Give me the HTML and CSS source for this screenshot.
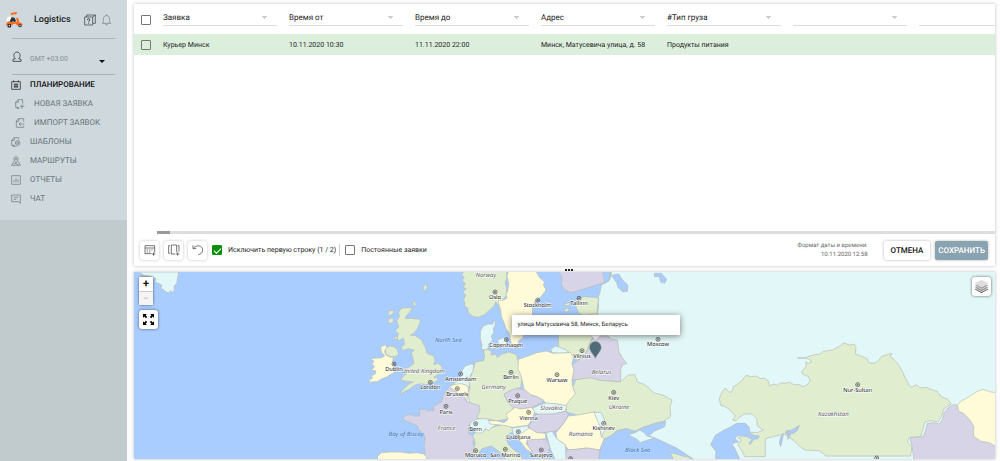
FILE: index.html
```html
<!DOCTYPE html>
<html lang="ru">
<head>
  <meta charset="UTF-8" />
  <meta name="viewport" content="width=device-width, initial-scale=1.0"/>
  <title>Logistics</title>
  <link rel="stylesheet" href="styles.css">
</head>
<body>
  <aside class="sidebar">
    <div class="sidebar-top">
      <header class="brand">
        <svg class="logo" viewBox="0 0 54 54">
          <path d="M17 6l18-3 0 6-16 4z" fill="#ff6a1a"/>
          <circle cx="26" cy="14" r="4" fill="#f3c9a5"/>
          <path d="M8 17h13v13H4z" fill="#fff"/>
          <path d="M20 18l9 3 4 9-4 4-6-4-2 10-8-6z" fill="#26343f"/>
          <path d="M33 22l6-2 5 18-6 6-6-6-8 1-2 4H3c0-9 6-12 14-11l12 2 7-2z" fill="#ff6a1a"/>
          <circle cx="13" cy="44" r="6" fill="#27313a"/><circle cx="13" cy="44" r="2" fill="#fff"/>
          <path d="M35 43c1-11 17-11 18 0z" fill="#ff6a1a"/><circle cx="45" cy="44" r="5" fill="#27313a"/><circle cx="45" cy="44" r="2" fill="#fff"/>
        </svg>
        <h1>Logistics</h1>
        <button class="icon-btn" aria-label="Справка">
          <svg class="ic-help" viewBox="0 0 36 36" fill="none" stroke="#333" stroke-width="2"><path d="M2 9h24v24H2zM8 9V3h26v25h-8M26 9l8-6"/><path d="M10 18c0-5 8-5 7 0 0 2-3 2-3 5M14 26v3" stroke-width="3"/></svg>
        </button>
        <button class="icon-btn" aria-label="Уведомления">
          <svg class="ic-bell" viewBox="0 0 30 36" fill="none" stroke="#7c8a8f" stroke-width="2.4"><path d="M2 28c4-3 4-7 4-14 0-6 4-9 9-9s9 3 9 9c0 7 0 11 4 14zM11 29c1 5 7 5 8 0M15 5V1"/></svg>
        </button>
      </header>
      <div class="user">
        <svg class="ic-user" viewBox="0 0 30 36" fill="none" stroke="#333" stroke-width="2.4"><path d="M10 23C2 16 6 3 15 3s13 13 5 20M10 23l-7 2v6h24v-6l-7-2"/></svg>
        <span>GMT +03:00</span>
        <button class="icon-btn" aria-label="Меню пользователя"><span class="caret"></span></button>
      </div>
      <nav class="menu">
        <a href="#" class="active"><svg viewBox="0 0 30 30"><path d="M2 5h26v23H2zM8 1v6M22 1v6M8 14h14M8 20h14M12 10v14M18 10v14"/></svg>Планирование</a>
        <a href="#" class="sub"><svg viewBox="0 0 30 30"><path d="M12 25H2V9l8-7h13v12M10 2v8H2M6 25v4h8M21 16v13M15 22h13"/></svg>Новая заявка</a>
        <a href="#" class="sub"><svg viewBox="0 0 30 30"><path d="M4 27V9l7-7h15v9M11 2v8H4M4 28h22v-5M28 18H12M17 13l-5 5 5 5"/></svg>Импорт заявок</a>
        <a href="#"><svg viewBox="0 0 30 30"><path d="M12 25H2V9l8-7h13v6M10 2v8H2M6 25v4h11"/><circle cx="20" cy="18" r="7"/><circle cx="20" cy="18" r="3"/></svg>Шаблоны</a>
        <a href="#"><svg viewBox="0 0 30 30"><path d="M15 21c-10-11-7-19 0-19s10 8 0 19z"/><circle cx="15" cy="9" r="3"/><path d="M8 17l-6 11h26l-6-11M8 24l7-2 7 5"/></svg>Маршруты</a>
        <a href="#"><svg viewBox="0 0 30 30"><path d="M2 2h26v26H2zM9 22v-7M15 22V9M21 22v-9"/></svg>Отчеты</a>
        <a href="#"><svg viewBox="0 0 30 30"><path d="M2 3h26v25l-6-5H2zM8 10h14M8 16h8"/></svg>Чат</a>
      </nav>
    </div>
  </aside>

  <main class="main">
    <section class="panel">
      <div class="table-wrap">
        <table class="orders">
          <thead>
            <tr>
              <th class="check"><input type="checkbox" aria-label="Выбрать все"></th>
              <th><select aria-label="Колонка 1"><option>Заявка</option></select></th>
              <th><select aria-label="Колонка 2"><option>Время от</option></select></th>
              <th><select aria-label="Колонка 3"><option>Время до</option></select></th>
              <th><select aria-label="Колонка 4"><option>Адрес</option></select></th>
              <th><select aria-label="Колонка 5"><option>#Тип груза</option></select></th>
              <th><select aria-label="Колонка 6"><option></option></select></th>
              <th><select aria-label="Колонка 7"><option></option></select></th>
            </tr>
          </thead>
          <tbody>
            <tr>
              <td class="check"><input type="checkbox" aria-label="Выбрать строку"></td>
              <td>Курьер Минск</td>
              <td>10.11.2020 10:30</td>
              <td>11.11.2020 22:00</td>
              <td>Минск, Матусевича улица, д. 58</td>
              <td>Продукты питания</td>
              <td></td>
              <td></td>
            </tr>
          </tbody>
        </table>
      </div>
      <div class="scrollbar"><div class="thumb"></div></div>
      <footer class="toolbar">
        <button class="tool" aria-label="Строки"><svg viewBox="0 0 36 36"><path d="M3 5h29v21M3 5v24h20M3 12h29M8 18h4M15 18h4M22 18h4M8 24h4M15 24h4M24 30h10M29 25v10"/></svg></button>
        <button class="tool" aria-label="Колонки"><svg viewBox="0 0 36 36"><path d="M10 3h16v22M10 3v27h12M6 5H2v23h4M29 5h4v18M24 30h10M29 25v10"/></svg></button>
        <button class="tool" aria-label="Отменить действие"><svg viewBox="0 0 36 36"><path d="M3 4v10h10M4 13C14 1 32 4 32 18c0 8-6 13-13 14"/></svg></button>
        <label><input type="checkbox" checked>Исключить первую строку (1 / 2)</label>
        <span class="divider"></span>
        <label><input type="checkbox">Постоянные заявки</label>
        <p class="format">Формат даты и времени:<br>10.11.2020 12:58</p>
        <button class="btn">Отмена</button>
        <button class="btn btn-primary">Сохранить</button>
      </footer>
    </section>

    <div class="splitter"><i></i><i></i><i></i></div>

    <section class="map">
      <svg class="world" viewBox="0 0 2583 561" preserveAspectRatio="xMidYMid slice">
        <!-- Greenland -->
        <path class="ru" d="M14 0H134L128 34 120 42 121 54 114 64 110 56 104 62 96 60 88 52 80 50 84 40 72 34 62 30 66 20 54 14 30 10z"/>

        <!-- Western Europe -->
        <g transform="translate(648 -6)">
          <path class="gr" d="M340 6l-5 10 8 6-7 10 10 8-6 12 9 4-10 10 8 10-6 12 4 12-2 8 10 6 2 14 16 12 14 2 18-8 16-14 12-10 6-14 8 8 2 10 8 1 3-26 10-10 2-24-4-18 4-12V0H345z"/>
          <path class="ye" d="M475 0L471 20 476 40 473 64 468 72 471 85 455 92 446 88 446 102 452 120 454 140 463 160 468 176 478 190 482 212 486 228 504 228 506 212 518 205 524 190 540 170 548 145 547 118 553 96 575 78 588 60 580 44 584 36 568 22 556 0z"/>
          <path class="gr" d="M155 114l32-1-8 14-10 10-2 9 14-1 30 3-2 14-8 16-8 10-12 8 14 0 8 6 12 8 6 14 6 10 4 16 12 4 10 6 2 14-4 10 14-4 11 10-1 12-8 10-10 6-6 4 12 2 2 6-18 10-20 4-12-3-18 3L178 358 164 364 148 376 156 362 170 348 180 340 190 336 170 334 152 330 160 318 172 310 166 296 180 290 192 280 188 262 184 250 192 240 175 236 158 242 154 232 164 222 160 204 148 212 140 205 146 192 136 182 146 170 140 152 148 140 146 126z"/>
          <path class="gr" d="M119 122l14-2-4 10-8 6-9-2zM114 148l10-4 8 5-4 9-10 2-4-6zM133 198l10 3-4 9-5-4zM188 98l8-4 2 10-5 6zM220 52l7-12 4 12-5 14-3-5zM105 236l14-8 14 2 8 8 5 14-10 8-16 0-12-8z"/>
          <path class="ye" d="M92 230l12-5 8 6-8 10 2 12 12 8 12 0-2 14 6 16-2 18-14 6-8 6-16 6-12 8-12 0-14 2 2-7 10-6-4-6 14-8-2-8-12-2 10-10-8-8 6-8-10-8 16-2 14 0 12-6-10-12z"/>
          <path class="ru" d="M434 148l-6 14-14 0-14 6-9 16 0 24 5 16-2 14 12 2 8-4 2-14 12-12-4-12 8-10-2-12 6-12zM418 222l16-3 4 14-14 4zM442 210l20-8 8 8 0 12-8 12-14-6z"/>
          <path class="gr" d="M400 242L412 238 424 244 424 256 438 252 442 262 456 252 478 246 500 254 508 290 516 330 512 352 500 357 480 364 462 374 474 396 492 412 476 430 472 448 440 452 416 448 388 446 362 444 358 430 366 410 356 396 356 370 360 350 355 335 366 310 372 290 376 276 400 272 404 260z"/>
          <path class="ru" d="M345 288l18-6 8 2-2 20-8 12-4 20 2 18-10-8-14-4-12 2-14-2 16-12 6-16 6-14zM348 378l8 4 4 20-10-4z"/>
          <path class="ye" d="M298 349l16-6 20-2 14 4 8 10-2 14-4 22-14-16-8 2-16-14-16-4z"/>
          <path class="pu" d="M298 349l14 12 18 12 8-2 12 24 38 12 2 16-8 16-4 20-20 4-2 12 0 16 10 4 6 12-4 14 12 16-2 10-10 10-12 8-8 14H220l6-30-4-20 4-24-6-14-14-12-2-10-16-8-14-6-12-4-4-10 20-8 20 6 12-2-2-18 16-2 8 6 20-2-2-12 14-8 10-4 4-18z"/>
          <path class="ye" d="M84 570l-2-10 12-12 26-2 30 0 28 4 22-2 22 4 8 10-2 12z"/>
          <path class="gr" d="M374 570L370 540 376 520 368 498 378 484 400 484 412 474 430 470 460 464 484 470 490 484 474 494 468 506 476 524 492 540 510 552 520 570 470 570 448 545 424 528 396 536 384 552z"/>
          <path class="ru" d="M360 458l16-10 14-2 20 0 8 6 2 10 12-4 6 8-12 6-10 10-10-6-8 12-12 2-14-6-12-6 0-14z"/>
        </g>

        <!-- Eastern Europe -->
        <g transform="translate(1098 -6)">
          <path class="pu" d="M172 0l14 20-2 22 8 16 20 10 30-8 44-14 26-8 20-22 0-16z"/>
          <path class="ru" d="M336 0L330 28 304 46 300 66 294 84 296 110 290 140 290 240 320 400 330 570H1495V0z"/>
          <path class="gr" d="M222 96l26-16 38 2 10 2-4 30 0 26-30 0-26-10-8-20zM192 118l12-4 4 6-10 8zM190 104l14-6 8 2-8 8z"/>
          <path class="gr" d="M174 150L204 160 224 140 294 130 292 180 272 212 262 240 252 262 232 270 216 264 205 245 176 232z"/>
          <path class="ru" d="M152 238l16-10 10 4 22 8 6 8-26 2-24-2z"/>
          <path class="pu" d="M216 330L222 300 217 285 232 272 250 262 262 240 272 212 292 198 325 198 330 206 352 210 357 245 366 262 380 280 366 286 362 300 362 335 300 332 270 324 228 330z"/>
          <path class="gr" d="M228 329L270 323 300 331 360 336 385 315 405 314 412 336 430 342 445 352 460 368 490 376 516 390 510 410 512 440 490 454 470 458 430 472 405 484 380 476 350 482 335 496 312 508 300 490 304 430 282 426 240 438 200 426 196 405 225 372 218 350z"/>
          <path class="ye" d="M168 488L188 464 205 438 240 434 282 426 298 455 302 492 312 508 300 540 260 534 206 540 190 520 170 508z"/>
          <path class="ru" d="M282 426L304 428 314 452 324 478 312 484 304 502 300 470z"/>
          <path class="ye" d="M55 268L84 258 110 248 140 243 158 250 212 248 220 262 216 282 222 300 216 330 218 350 226 372 208 392 198 408 170 402 140 400 115 382 90 374 72 358 64 320 54 296z"/>
          <path class="pu" d="M12 372L34 360 50 354 75 360 92 374 115 382 131 390 122 400 96 412 60 417 40 412 24 398z"/>
          <path class="ru" d="M103 428L98 414 120 404 140 399 170 402 200 407 196 424 160 432 120 434z"/>
          <path class="pu" d="M86 466L104 446 108 432 120 432 160 432 200 424 205 436 190 460 170 482 120 490 95 482z"/>
          <path class="ye" d="M-35 452L-10 452 12 458 24 448 18 432 30 424 45 412 62 417 95 412 104 424 98 445 84 466 40 472 10 466 -30 462z"/>
          <path class="ru" d="M36 474L84 467 86 480 66 494 40 494z"/>
          <path class="ye" d="M58 494L88 474 110 488 136 490 138 506 110 510 86 510 78 520 100 548 80 540 62 516 50 504z"/>
          <path class="pu" d="M80 510L110 508 138 508 150 530 140 566 110 560 86 530z"/>
          <path class="ru" d="M138 488L156 484 170 506 196 524 200 570 166 570 150 534z"/>
          <path class="pu" d="M198 540L230 538 262 534 300 540 296 574H198z"/>
          <path class="sea" d="M296 570L302 532 314 508 336 496 352 482 380 476 404 484 430 472 470 460 497 454 494 470 462 484 448 498 470 506 500 520 530 534 590 574z"/>
          <path class="ru" d="M385 494l20-6 14-8 14 8 8 10 24 6-22 6-22 8-10-10z"/>
          <path class="sea" d="M308 2l22 2-4 30-12 6zM334 16l22-4 10 16 18 18-2 18-14 2-14-14-4-14zM462 10l22 0 16 18-6 12-12-4-4-16-14 0z"/>
        </g>

        <!-- Central Asia -->
        <g transform="translate(1608 -6)">
          <path class="gr" d="M382 264l20 0 24-8 24-4 10-8 28-4 22-12 12-9 16 6 14-3 6 10-2 20 22 8 14 6 4 12 16 2 14-8 10-14 30-8-6 10 12 8 14 16 12 22 14 30 10 16 18-8 10 10 20-2 12 6 20 6 12 16 20 8 10 14-22 14-8 24-10 16-22-4-18 4-6 24-6 20-34 2-6 14 14 14-4 28H466l-6-8-14-8-40-2-14-8-20-20-30-20-56 14v54h-62l-10-20-10-16 10-14-10-8 12-2 14-14 32 2 18-8-18-12-2-22-14-14-24 0-14 10-10 10-10-2 8-12-14-16-16-12-14-4-4-20 8-20 10-12 10 12 10 0 4-16 16-10 12-12 10-12 14 4 16-2 14 8 10-2 14 10 2 14 14-6 10 4 10-8 14 2 12-4 14 8 16 0 12 6 12-6 8-10-4-14-18-8-4-6 14-16 0-14 8 4 10-4-8-8-14-4z"/>
          <path class="sea" d="M136 570l2-26-16-20 14-28 26-16 18-8 20-12 26 0 12 12 2 18 12 6 16 2-4 8-12 2-12 16-2-6 8-10-14-8-26-4-12 8 12 12-12 2-8 4 12 20 12 28z"/>
          <path class="sea" d="M332 500l8-10-2 18-6 22-4-12zM352 490l10 4-8 14zM354 484l18-8 16-10-6 16-12 8-14 2zM346 486l6-6 4 6-8 6z"/>
          <path class="pu" d="M850 404l-16 10-12 14-4 20-10 14-18-4-18 2-6 24-6 16-40 4 6 24 6 42h300v-48l-30-12-20-2-14-12 0-22-6-24-10-12-24-10-4-16z"/>
          <path class="ye" d="M862 406l10-12 26-14 20-14 20-8 24 8 20 2v164l-24-14-24-4-22-14-2-16 2-14-12-20-20-20-14-6z"/>
          <path class="gr" d="M0 548l20 4 16 6 24 4v12H14z"/>
        </g>

        <g class="country">
          <text x="1056" y="16">Norway</text><text x="868" y="302">United Kingdom</text><text x="1079" y="352">Germany</text>
          <text x="938" y="475">France</text><text x="1252" y="413">Slovakia</text><text x="1403" y="307">Belarus</text>
          <text x="1455" y="410">Ukraine</text><text x="1340" y="493">Romania</text><text x="2098" y="431">Kazakhstan</text>
        </g>
        <g class="water">
          <text x="943" y="210">North Sea</text><text x="816" y="491">Bay of Biscay</text><text x="1511" y="539">Black Sea</text>
        </g>
        <g class="cities">
          <g><circle cx="1083" cy="60" r="6"/><circle cx="1083" cy="60" r="2"/><text x="1083" y="81">Oslo</text></g>
          <g><circle cx="1211" cy="85" r="6"/><circle cx="1211" cy="85" r="2"/><text x="1211" y="106">Stockholm</text></g>
          <g><circle cx="1335" cy="79" r="6"/><circle cx="1335" cy="79" r="2"/><text x="1335" y="100">Tallinn</text></g>
          <g><circle cx="1117" cy="203" r="6"/><circle cx="1117" cy="203" r="2"/><text x="1117" y="224">Copenhagen</text></g>
          <g><circle cx="780" cy="276" r="6"/><circle cx="780" cy="276" r="2"/><text x="780" y="298">Dublin</text></g>
          <g><circle cx="889" cy="331" r="6"/><circle cx="889" cy="331" r="2"/><text x="889" y="352">London</text></g>
          <g><circle cx="980" cy="306" r="6"/><circle cx="980" cy="306" r="2"/><text x="980" y="327">Amsterdam</text></g>
          <g><circle cx="970" cy="350" r="6"/><circle cx="970" cy="350" r="2"/><text x="970" y="371">Brussels</text></g>
          <g><circle cx="1131" cy="301" r="6"/><circle cx="1131" cy="301" r="2"/><text x="1131" y="322">Berlin</text></g>
          <g><circle cx="1151" cy="371" r="6"/><circle cx="1151" cy="371" r="2"/><text x="1151" y="392">Prague</text></g>
          <g><circle cx="936" cy="403" r="6"/><circle cx="936" cy="403" r="2"/><text x="936" y="425">Paris</text></g>
          <g><circle cx="1025" cy="455" r="6"/><circle cx="1025" cy="455" r="2"/><text x="1025" y="477">Bern</text></g>
          <g><circle cx="1184" cy="421" r="6"/><circle cx="1184" cy="421" r="2"/><text x="1184" y="443">Vienna</text></g>
          <g><circle cx="1153" cy="479" r="6"/><circle cx="1153" cy="479" r="2"/><text x="1153" y="502">Ljubljana</text></g>
          <g><circle cx="1025" cy="536" r="6"/><circle cx="1025" cy="536" r="2"/><text x="1025" y="555">Monaco</text></g>
          <g><circle cx="1114" cy="532" r="6"/><circle cx="1114" cy="532" r="2"/><text x="1114" y="554">San Marino</text></g>
          <g><circle cx="1222" cy="534" r="6"/><circle cx="1222" cy="534" r="2"/><text x="1222" y="555">Sarajevo</text></g>
          <g><circle cx="1269" cy="308" r="6"/><circle cx="1269" cy="308" r="2"/><text x="1269" y="330">Warsaw</text></g>
          <g><circle cx="1344" cy="236" r="6"/><circle cx="1344" cy="236" r="2"/><text x="1344" y="258">Vilnius</text></g>
          <g><circle cx="1439" cy="361" r="6"/><circle cx="1439" cy="361" r="2"/><text x="1439" y="383">Kiev</text></g>
          <g><circle cx="1409" cy="454" r="6"/><circle cx="1409" cy="454" r="2"/><text x="1409" y="475">Kishinev</text></g>
          <g><circle cx="1572" cy="202" r="6"/><circle cx="1572" cy="202" r="2"/><text x="1572" y="223">Moscow</text></g>
          <g><circle cx="2171" cy="338" r="6"/><circle cx="2171" cy="338" r="2"/><text x="2171" y="360">Nur-Sultan</text></g>
          <g><circle cx="1310" cy="560" r="6"/><circle cx="1310" cy="560" r="2"/></g>
          <g><circle cx="2228" cy="558" r="6"/><circle cx="2228" cy="558" r="2"/></g>
        </g>
        <path d="M1366 188h38l-19 16z" fill="#fff"/>
        <path d="M1384 260c-6-14-18-22-18-34a18 18 0 0 1 36 0c0 12-12 20-18 34z" fill="#4f6b78" stroke="#fff" stroke-width="3"/>
      </svg>

      <div class="popup">улица Матусевича 58, Минск, Беларусь</div>
      <div class="controls">
        <div class="zoom">
          <button aria-label="Приблизить">+</button>
          <button aria-label="Отдалить" disabled>−</button>
        </div>
        <button class="map-btn" aria-label="На весь экран"><svg viewBox="0 0 40 40"><path d="M3 3h12l-4 4 5 5-4 4-5-5-4 4zM37 3v12l-4-4-5 5-4-4 5-5-4-4zM3 37V25l4 4 5-5 4 4-5 5 4 4zM37 37H25l4-4-5-5 4-4 5 5 4-4z"/></svg></button>
      </div>
      <button class="map-btn layers" aria-label="Слои"><svg viewBox="0 0 42 42"><path d="M21 19l20 10-20 11L1 29z" fill="#777"/><path d="M21 14l20 10-20 11L1 24z" fill="#888" stroke="#fff" stroke-width="2"/><path d="M21 8l20 10-20 11L1 18z" fill="#999" stroke="#fff" stroke-width="2"/><path d="M21 2l20 10-20 11L1 12z" fill="#ddd" stroke="#fff"/></svg></button>
    </section>
  </main>
</body>
</html>
```

FILE: styles.css
```css
* {
  box-sizing: border-box;
}

body {
  margin: 0;
  display: flex;
  min-height: 100vh;
  font-family: Roboto, sans-serif;
  font-size: 7px;
  color: #222;
  background: #fdfdfd;
  text-rendering: geometricPrecision;
}

button,
select {
  font-family: inherit;
  text-rendering: inherit;
  cursor: pointer;
}

svg {
  display: block;
}

/* Sidebar */
.sidebar {
  flex: 0 0 127px;
  background: #c1cbce;
}

.sidebar-top {
  background: #ced8dd;
  padding-bottom: 12px;
}

.brand {
  display: flex;
  align-items: center;
  height: 38px;
  padding: 2px 15px 0 5px;
  gap: 5px;
}

.logo {
  width: 18px;
  height: 18px;
}

.brand h1 {
  flex: 1;
  margin: 0;
  padding-left: 6px;
  font-size: 9px;
  font-weight: 500;
}

.icon-btn {
  padding: 0;
  border: none;
  background: none;
}

.ic-help {
  width: 12px;
  height: 12px;
}

.ic-bell {
  width: 11px;
  height: 12px;
}

.user {
  display: flex;
  align-items: center;
  height: 37px;
  margin: 0 12px;
  padding-right: 10px;
  gap: 8px;
  border-top: 1px solid #aab4b8;
  border-bottom: 1px solid #aab4b8;
  color: #849196;
}

.user span {
  flex: 1;
  padding-top: 5px;
}

.ic-user {
  width: 10px;
  height: 12px;
}

.user .caret {
  display: block;
  margin-top: 10px;
  padding: 0;
  border: 3px solid transparent;
  border-top-color: #111;
  border-bottom: none;
}

.menu a {
  display: flex;
  align-items: center;
  height: 19px;
  padding-left: 11px;
  gap: 9px;
  font-size: 8px;
  text-transform: uppercase;
  text-decoration: none;
  color: #67757a;
}

.menu a.sub {
  padding-left: 15px;
}

.menu a.active {
  font-weight: 500;
  color: #111;
}

.menu svg {
  width: 10px;
  height: 10px;
  fill: none;
  stroke: currentColor;
  stroke-width: 2;
}

/* Main */
.main {
  flex: 1;
  min-width: 0;
  height: 100vh;
  display: flex;
  flex-direction: column;
  padding: 4px 5px 2px 7px;
}

.panel {
  flex: 262;
  min-height: 0;
  display: flex;
  flex-direction: column;
  background: #fff;
  box-shadow: 0 0 3px rgba(0, 0, 0, 0.25);
}

.table-wrap {
  flex: 1;
  overflow: hidden;
}

.orders {
  width: 910px;
  table-layout: fixed;
  border-collapse: collapse;
}

.orders th,
.orders td {
  padding: 0;
  text-align: left;
}

.orders thead tr {
  height: 30px;
}

.orders tbody tr {
  height: 21px;
  background: #dcefdc;
}

.orders .check {
  width: 28px;
  padding-left: 7px;
}

.orders th.check {
  padding-top: 2px;
}

.orders tbody td {
  padding-left: 1px;
}

.orders tbody .check {
  padding-left: 7px;
}

.orders select {
  display: block;
  width: 114px;
  height: 16px;
  margin: -2px 0 0 1px;
  padding: 0;
  appearance: none;
  border: none;
  border-bottom: 1px solid #ddd;
  border-radius: 0;
  font-size: 8px;
  color: #222;
  background: conic-gradient(from -45deg at 50% 100%, #ccc 90deg, transparent 0) no-repeat right 10px center / 5px 3px;
}

input[type="checkbox"] {
  display: block;
  width: 10px;
  height: 10px;
  margin: 0;
  appearance: none;
  border: 1px solid #777;
  border-radius: 1px;
}

input[type="checkbox"]:checked {
  border-color: #0a8f0a;
  background: #0a8f0a;
}

input[type="checkbox"]:checked::before {
  content: "";
  display: block;
  width: 6px;
  height: 3px;
  margin: 2px 0 0 1px;
  border: solid #fff;
  border-width: 0 0 1px 1px;
  transform: rotate(-45deg);
}

.scrollbar {
  height: 3px;
  margin-left: 23px;
  background: #ddd;
}

.thumb {
  width: 13px;
  height: 3px;
  background: #999;
}

.toolbar {
  display: flex;
  align-items: center;
  height: 32px;
  padding: 0 7px 0 6px;
  gap: 5px;
}

.tool {
  width: 19px;
  height: 19px;
  padding: 3px;
  border: none;
  border-radius: 3px;
  background: #fff;
  box-shadow: 0 0 3px rgba(0, 0, 0, 0.25);
}

.tool svg {
  width: 12px;
  height: 12px;
  margin: auto;
  fill: none;
  stroke: #333;
  stroke-width: 2;
}

.toolbar label {
  display: flex;
  align-items: center;
  gap: 6px;
}

.divider {
  width: 1px;
  height: 12px;
  margin-left: -2px;
  background: #ccc;
}

.format {
  margin: 0 11px 0 auto;
  font-size: 6px;
  line-height: 9px;
  text-align: right;
  color: #666;
}

.btn {
  height: 19px;
  padding: 0 7px;
  border: none;
  border-radius: 2px;
  font-size: 8px;
  font-weight: 500;
  text-transform: uppercase;
  color: #111;
  background: #fff;
  box-shadow: 0 0 3px rgba(0, 0, 0, 0.3);
}

.btn-primary {
  padding: 0 3px;
  color: #fff;
  background: #8aa3b0;
}

.splitter {
  display: flex;
  justify-content: center;
  align-items: flex-end;
  gap: 1px;
  height: 6px;
  padding: 0 0 1px 8px;
}

.splitter i {
  width: 2px;
  height: 2px;
  background: #222;
}

/* Map */
.map {
  position: relative;
  flex: 187;
  min-height: 0;
  overflow: hidden;
  background: #aacdff;
  box-shadow: 0 0 3px rgba(0, 0, 0, 0.25);
}

.world {
  width: 100%;
  height: 100%;
}

.world path {
  stroke: #b5bcb5;
  stroke-width: 2;
  stroke-linejoin: round;
}

.world .ru {
  fill: #e2f7f7;
}

.world .gr {
  fill: #e0edcf;
}

.world .ye {
  fill: #fffbd8;
}

.world .pu {
  fill: #d7d4e7;
}

.world .sea {
  fill: #aacdff;
}

.world text {
  font-family: "Noto Sans", sans-serif;
  font-size: 17px;
  text-anchor: middle;
  fill: #111;
  stroke: #fff;
  stroke-width: 3px;
  paint-order: stroke;
}

.world circle {
  fill: none;
  stroke: #444;
  stroke-width: 2;
}

.world .country text {
  font-size: 18px;
  font-style: italic;
  fill: #555;
}

.world .water text {
  font-size: 18px;
  font-style: italic;
  fill: #2f6cae;
  stroke: #c4ddff;
}

.popup {
  position: absolute;
  left: calc(50% + 31px);
  top: calc(50% - 51px);
  width: 168px;
  height: 20px;
  padding: 0 6px;
  font-size: 6px;
  line-height: 20px;
  transform: translateX(-50%);
  background: #fff;
  box-shadow: 0 1px 6px rgba(0, 0, 0, 0.5);
}

.controls {
  position: absolute;
  left: 5px;
  top: 5px;
}

.zoom {
  width: 14px;
  margin-bottom: 5px;
  border-radius: 2px;
  box-shadow: 0 0 3px rgba(0, 0, 0, 0.6);
}

.zoom button {
  display: block;
  width: 14px;
  height: 14px;
  padding: 0;
  border: none;
  font-size: 11px;
  font-weight: 700;
  line-height: 14px;
  color: #111;
  background: #fff;
}

.zoom button:disabled {
  border-top: 1px solid #ccc;
  font-weight: 400;
  color: #bbb;
  background: #f4f4f4;
}

.map-btn {
  width: 19px;
  height: 19px;
  padding: 0;
  border: none;
  border-radius: 3px;
  background: #fff;
  box-shadow: 0 0 3px rgba(0, 0, 0, 0.6);
}

.map-btn svg {
  width: 13px;
  height: 13px;
  margin: auto;
}

.layers {
  position: absolute;
  top: 5px;
  right: 4px;
}

.layers svg {
  width: 15px;
  height: 15px;
}
```
